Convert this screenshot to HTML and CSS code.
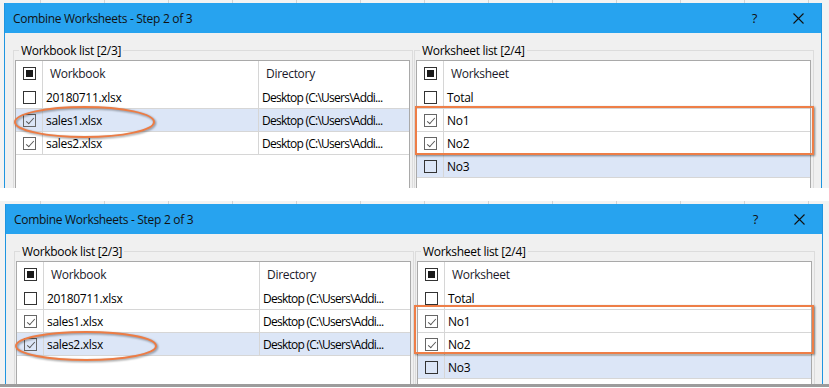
FILE: index.html
```html
<!DOCTYPE html>
<html lang="en">

<head>
    <meta charset="UTF-8">
    <title>Combine Worksheets</title>
    <link rel="stylesheet" href="styles.css">
</head>

<body>
    <!-- first capture: sales1 selected -->
    <div class="shot shot-top">
        <div class="dialog">
            <div class="titlebar">
                <span class="title">Combine Worksheets - Step 2 of 3</span>
                <span class="help">?</span>
                <svg class="close" width="11" height="11" viewBox="0 0 11 11">
                    <path d="M0.5 0.5L10.5 10.5M10.5 0.5L0.5 10.5" stroke="#111" stroke-width="1.1" fill="none" />
                </svg>
            </div>
            <div class="dialog-body">
                <fieldset class="group">
                    <legend>Workbook list [2/3]</legend>
                    <div class="list">
                        <div class="row head">
                            <div class="cell chk"><span class="cb mixed"></span></div>
                            <div class="cell name">Workbook</div>
                            <div class="cell dir">Directory</div>
                        </div>
                        <div class="row">
                            <div class="cell chk"><span class="cb"></span></div>
                            <div class="cell name">20180711.xlsx</div>
                            <div class="cell dir">Desktop (C:\Users\Addi...</div>
                        </div>
                        <div class="row selected">
                            <div class="cell chk"><span class="cb on"></span></div>
                            <div class="cell name">sales1.xlsx</div>
                            <div class="cell dir">Desktop (C:\Users\Addi...</div>
                        </div>
                        <div class="row">
                            <div class="cell chk"><span class="cb on"></span></div>
                            <div class="cell name">sales2.xlsx</div>
                            <div class="cell dir">Desktop (C:\Users\Addi...</div>
                        </div>
                    </div>
                </fieldset>
                <fieldset class="group">
                    <legend>Worksheet list [2/4]</legend>
                    <div class="list">
                        <div class="row head">
                            <div class="cell chk"><span class="cb mixed"></span></div>
                            <div class="cell sheet">Worksheet</div>
                        </div>
                        <div class="row">
                            <div class="cell chk"><span class="cb"></span></div>
                            <div class="cell sheet">Total</div>
                        </div>
                        <div class="row">
                            <div class="cell chk"><span class="cb on"></span></div>
                            <div class="cell sheet">No1</div>
                        </div>
                        <div class="row">
                            <div class="cell chk"><span class="cb on"></span></div>
                            <div class="cell sheet">No2</div>
                        </div>
                        <div class="row selected">
                            <div class="cell chk"><span class="cb"></span></div>
                            <div class="cell sheet">No3</div>
                        </div>
                    </div>
                </fieldset>
            </div>
        </div>
        <svg class="ring ring-top" width="148" height="38" viewBox="0 0 148 38">
            <ellipse cx="72.5" cy="18" rx="69.5" ry="15" />
        </svg>
        <div class="frame frame-top"></div>
    </div>

    <!-- second capture: sales2 selected -->
    <div class="shot shot-bottom">
        <div class="dialog">
            <div class="titlebar">
                <span class="title">Combine Worksheets - Step 2 of 3</span>
                <span class="help">?</span>
                <svg class="close" width="11" height="11" viewBox="0 0 11 11">
                    <path d="M0.5 0.5L10.5 10.5M10.5 0.5L0.5 10.5" stroke="#111" stroke-width="1.1" fill="none" />
                </svg>
            </div>
            <div class="dialog-body">
                <fieldset class="group">
                    <legend>Workbook list [2/3]</legend>
                    <div class="list">
                        <div class="row head">
                            <div class="cell chk"><span class="cb mixed"></span></div>
                            <div class="cell name">Workbook</div>
                            <div class="cell dir">Directory</div>
                        </div>
                        <div class="row">
                            <div class="cell chk"><span class="cb"></span></div>
                            <div class="cell name">20180711.xlsx</div>
                            <div class="cell dir">Desktop (C:\Users\Addi...</div>
                        </div>
                        <div class="row">
                            <div class="cell chk"><span class="cb on"></span></div>
                            <div class="cell name">sales1.xlsx</div>
                            <div class="cell dir">Desktop (C:\Users\Addi...</div>
                        </div>
                        <div class="row selected">
                            <div class="cell chk"><span class="cb on"></span></div>
                            <div class="cell name">sales2.xlsx</div>
                            <div class="cell dir">Desktop (C:\Users\Addi...</div>
                        </div>
                    </div>
                </fieldset>
                <fieldset class="group">
                    <legend>Worksheet list [2/4]</legend>
                    <div class="list">
                        <div class="row head">
                            <div class="cell chk"><span class="cb mixed"></span></div>
                            <div class="cell sheet">Worksheet</div>
                        </div>
                        <div class="row">
                            <div class="cell chk"><span class="cb"></span></div>
                            <div class="cell sheet">Total</div>
                        </div>
                        <div class="row">
                            <div class="cell chk"><span class="cb on"></span></div>
                            <div class="cell sheet">No1</div>
                        </div>
                        <div class="row">
                            <div class="cell chk"><span class="cb on"></span></div>
                            <div class="cell sheet">No2</div>
                        </div>
                        <div class="row selected">
                            <div class="cell chk"><span class="cb"></span></div>
                            <div class="cell sheet">No3</div>
                        </div>
                    </div>
                </fieldset>
            </div>
        </div>
        <svg class="ring ring-bottom" width="148" height="36" viewBox="0 0 148 36">
            <ellipse cx="73" cy="17" rx="70" ry="14" />
        </svg>
        <div class="frame frame-bottom"></div>
    </div>
</body>

</html>
```

FILE: styles.css
```css
* {
    margin: 0;
    padding: 0;
    box-sizing: border-box;
}

body {
    background: #fff;
    font-family: "Open Sans", "Liberation Sans", sans-serif;
    font-size: 12px;
    letter-spacing: -0.3px;
    color: #000;
}

/* a cropped capture, with the sheet grid showing round the dialog */
.shot {
    position: relative;
    width: 829px;
    overflow: hidden;
    background-color: #f3f3f3;
    background-image: linear-gradient(to right, #d3d3d3 1px, transparent 1px);
    background-size: 64px 100%;
    background-position: 40px 0;
}

.shot-top {
    height: 188px;
    padding: 3px 0 0 4px;
}

.shot-bottom {
    height: 186px;
    margin-top: 13px;
    padding: 3px 0 0 5px;
    border-bottom: 3px solid #9c9c9c;
}

.dialog {
    width: 818px;
    height: 400px;
    background: #f0f0f0;
    border-left: 1px solid #1f95e0;
    border-right: 1px solid #1f95e0;
}

.titlebar {
    height: 30px;
    background: #27a3ef;
    display: flex;
    align-items: center;
    padding: 0 17px 0 8px;
    color: #111;
}

.title {
    flex: 1;
}

.help {
    font-size: 13px;
    margin-right: 36px;
}

.dialog-body {
    display: flex;
    gap: 1px;
    padding: 10px 7px 0 8px;
}

.group {
    width: 400px;
    min-width: 0;
    border: 1px solid #dcdcdc;
    padding: 0 2px 0 1px;
}

.group legend {
    margin-left: 4px;
    padding: 0 2px;
    line-height: 15px;
}

.list {
    margin-top: 2px;
    height: 200px;
    background: #fff;
    border: 1px solid #a9a9a9;
}

.row {
    display: flex;
    height: 23px;
    border-bottom: 1px solid #d6d6d6;
}

.row.head {
    height: 25px;
    border-bottom: none;
    color: #1a1a2a;
}

.row.selected {
    background: #dce6f7;
}

.cell {
    display: flex;
    align-items: center;
    overflow: hidden;
    white-space: nowrap;
    border-right: 1px solid #d6d6d6;
}

.chk {
    width: 27px;
    justify-content: center;
}

.name {
    width: 216px;
    padding-left: 3px;
}

.dir,
.sheet {
    flex: 1;
    padding-left: 3px;
    border-right: none;
}

/* paths are packed tighter so the whole cell text fits */
.row .dir {
    letter-spacing: -0.75px;
}

.head .name,
.head .dir,
.head .sheet {
    padding-left: 7px;
    letter-spacing: -0.3px;
}

.cb {
    position: relative;
    flex: none;
    width: 13px;
    height: 13px;
    border: 1px solid #333;
}

.cb.on {
    border-color: #666;
}

.cb.on::after {
    content: "";
    position: absolute;
    left: 4px;
    top: 1px;
    width: 3px;
    height: 7px;
    border: solid #555;
    border-width: 0 1px 1px 0;
    transform: rotate(42deg);
}

.cb.mixed::after {
    content: "";
    position: absolute;
    left: 2px;
    top: 2px;
    width: 7px;
    height: 7px;
    background: #1a1a1a;
}

/* orange annotation marks drawn over the capture */
.ring {
    position: absolute;
    overflow: visible;
    filter: drop-shadow(1px 1px 1px rgba(0, 0, 0, 0.45));
}

.ring ellipse {
    fill: none;
    stroke: #ec7c45;
    stroke-width: 2;
}

.ring-top {
    left: 12px;
    top: 104px;
}

.ring-bottom {
    left: 13px;
    top: 128px;
}

.frame {
    position: absolute;
    border: 2px solid #ee7e47;
    box-shadow: 1px 1px 2px rgba(0, 0, 0, 0.45);
}

.frame-top {
    left: 415px;
    top: 106px;
    width: 399px;
    height: 49px;
}

.frame-bottom {
    left: 414px;
    top: 104px;
    width: 400px;
    height: 49px;
}
```
